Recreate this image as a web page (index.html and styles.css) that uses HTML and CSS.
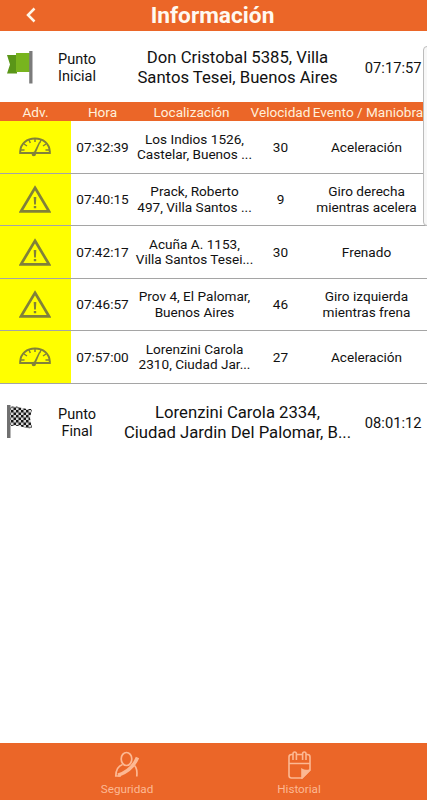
FILE: index.html
```html
<!DOCTYPE html>
<html lang="es">
<head>
<meta charset="utf-8">
<title>Información</title>
<link rel="stylesheet" href="styles.css">
</head>
<body>
<svg class="defs" width="0" height="0">
  <defs>
    <symbol id="gauge" viewBox="0 0 32 20">
      <path d="M1.200 16V14.500C1.600 6.500 8 1.600 16 1.600S30.400 6.500 30.800 14.500V16Z" fill="none" stroke="currentColor" stroke-width="2"/>
      <path d="M2 13h3.500M26.500 13H30M5 7l3 2M27 7l-3 2M10 3l1.300 3M22 3l-1.300 3M16 1.500v3.500" stroke="currentColor" stroke-width="1.500"/>
      <path d="M20 5l1.300.5L16.300 17h-2.300z" fill="currentColor"/>
      <circle cx="14.800" cy="17" r="2.200" fill="currentColor"/>
    </symbol>
    <symbol id="warn" viewBox="0 0 32 28">
      <path d="M16 2.800L30 26.300H2Z" fill="none" stroke="currentColor" stroke-width="2.700"/>
      <path d="M14.700 12h2.600l-.4 7.500h-1.800zM14.800 21h2.400v2.200h-2.400z" fill="currentColor"/>
    </symbol>
    <pattern id="checks" width="5" height="5" patternUnits="userSpaceOnUse">
      <path d="M0 0h5v5H0z" fill="#d4d4d4"/>
      <path d="M0 0h2.500v2.500H0zM2.500 2.500H5V5H2.500z" fill="#171717"/>
    </pattern>
  </defs>
</svg>
<div class="app">
  <header class="bar">
    <svg class="back" width="12" height="16" viewBox="0 0 12 16"><path d="M9.500 1.500L3 8l6.500 6.500" fill="none" stroke="#fff6e8" stroke-width="2.500"/></svg>
    <h1>Información</h1>
  </header>
  <main>
    <section class="point start">
      <svg class="flag" width="28" height="34" viewBox="0 0 28 34"><path d="M1 5h10v18.500H1l3-9z" fill="#5a9618"/><path d="M10 3h14v19H10z" fill="#78b41e"/><path d="M23.200 1h3.300v32.500h-3.300z" fill="#7b7b7b"/></svg>
      <div class="label">Punto<br>Inicial</div>
      <div class="address">Don Cristobal 5385, Villa<br>Santos Tesei, Buenos Aires</div>
      <time>07:17:57</time>
    </section>
    <section class="events">
      <div class="row head"><span>Adv.</span><span>Hora</span><span class="loc">Localización</span><span>Velocidad</span><span class="event">Evento / Maniobra</span></div>
      <div class="row"><span class="adv"><svg class="gauge"><use href="#gauge"/></svg></span><span class="hour">07:32:39</span><span>Los Indios 1526,<br>Castelar, Buenos ...</span><span>30</span><span>Aceleración</span></div>
      <div class="row"><span class="adv"><svg class="warn"><use href="#warn"/></svg></span><span class="hour">07:40:15</span><span>Prack, Roberto<br>497, Villa Santos ...</span><span>9</span><span>Giro derecha<br>mientras acelera</span></div>
      <div class="row"><span class="adv"><svg class="warn"><use href="#warn"/></svg></span><span class="hour">07:42:17</span><span>Acuña A. 1153,<br>Villa Santos Tesei...</span><span>30</span><span>Frenado</span></div>
      <div class="row"><span class="adv"><svg class="warn"><use href="#warn"/></svg></span><span class="hour">07:46:57</span><span>Prov 4, El Palomar,<br>Buenos Aires</span><span>46</span><span>Giro izquierda<br>mientras frena</span></div>
      <div class="row"><span class="adv"><svg class="gauge"><use href="#gauge"/></svg></span><span class="hour">07:57:00</span><span>Lorenzini Carola<br>2310, Ciudad Jar...</span><span>27</span><span>Aceleración</span></div>
    </section>
    <section class="point end">
      <svg class="flag" width="28" height="34" viewBox="0 0 28 34"><path d="M1 0h3.500v33H1z" fill="#707070"/><path d="M4.500 2c5-1 8 0 11.500 1s6 1 10 1l-2 9 2 10c-5 .5-8-.5-11-1.500s-6-1-10.500-.5z" fill="url(#checks)"/></svg>
      <div class="label">Punto<br>Final</div>
      <div class="address">Lorenzini Carola 2334,<br>Ciudad Jardin Del Palomar, B...</div>
      <time>08:01:12</time>
    </section>
  </main>
  <nav class="tabs">
    <a class="tab">
      <svg width="26" height="28" viewBox="0 0 26 28" fill="none" stroke="currentColor"><ellipse cx="12.500" cy="8" rx="5.300" ry="6.500" stroke-width="1.700"/><path d="M8.500 13.500C4 15 2 18 1.800 25h5" stroke-width="1.700"/><path d="M23.500 6.500C20 15 14 21 4 24.300" stroke-width="3.600"/><path d="M20.500 14.500c2.500 2.500 2.800 6 2.300 11" stroke-width="1.700"/></svg>
      <span>Seguridad</span>
    </a>
    <a class="tab">
      <svg width="26" height="28" viewBox="0 0 26 28" fill="none" stroke="currentColor" stroke-width="1.600"><path d="M7 3.500H5.500Q3 3.500 3 6v18.500Q3 27 5.500 27H16l8-8V6q0-2.500-2.500-2.500H20M10.500 3.500h6M3 12.500h21"/><path d="M7 9V3q0-2 1.700-2t1.700 2v6M16.600 9V3q0-2 1.700-2T20 3v6"/><path d="M16 27v-8.500q3 2 8 .5z" fill="currentColor"/></svg>
      <span>Historial</span>
    </a>
  </nav>
  <div class="edge-panel"></div>
</div>
</body>
</html>
```
FILE: styles.css
```css
* { box-sizing: border-box; }
body { margin: 0; background: #fff; color: #111; font-family: Roboto, "Liberation Sans", sans-serif; }
.defs { position: absolute; }
.app { position: relative; display: flex; flex-direction: column; width: 427px; height: 800px; overflow: hidden; }
.bar { display: grid; grid-template-columns: 26px 1fr 28px; align-items: center; height: 31px; background: #eb6628; color: #fff9f0; flex: none; }
.back { margin: -2px 0 0 25px; }
h1 { margin: 0; text-align: center; font-size: 22.7px; line-height: 31px; font-weight: 700; }
main { flex: 1; }
.point { display: grid; grid-template-columns: 43px 68px 253px 1fr; align-items: center; text-align: center; white-space: nowrap; }
.start { height: 71px; padding-top: 2px; }
.end { height: 79px; }
.flag { margin: -2px 0 0 6.5px; }
.label { font-size: 14.5px; line-height: 17px; }
.address { font-size: 16.7px; line-height: 20px; }
.start .flag, .end .flag { margin-left: 6px; }
.start .flag { margin-top: -1px; }
.start .address { padding-top: 1px; }
.point time { font-size: 14.7px; padding-right: 5.5px; justify-self: end; }
.row { display: grid; grid-template-columns: 71px 63px 121px 51px 121px; align-items: center; height: 52.5px; border-bottom: 1px solid #a5a5a5; text-align: center; font-size: 13.6px; line-height: 15.5px; white-space: nowrap; }
.row > span { justify-self: center; padding-top: 1px; }
.row .adv { display: flex; align-items: center; justify-content: center; align-self: stretch; justify-self: stretch; padding: 0 2px 0 0; background: #ff0; color: #81813a; }
.head { height: 19px; background: #eb6628; border: 0; color: #fff0dc; font-size: 13.6px; }
.row.head > span { padding-top: 2px; }
.head .loc { padding-right: 6px; }
.head .event { padding-left: 3px; }
.gauge { width: 32px; height: 20px; }
.warn { width: 32px; height: 28px; }
.tabs { display: flex; justify-content: center; height: 57px; padding-right: 1px; background: #eb6628; color: #fcb893; flex: none; }
.tab { display: flex; flex-direction: column; align-items: center; width: 172px; padding-top: 8px; font-size: 11.7px; line-height: 14px; }
.tab span { margin-top: 3px; }
.edge-panel { position: absolute; left: 423px; top: 46px; width: 10px; height: 180px; border: 1px solid #bcbcbc; border-radius: 4px; background: #f7f7f7; }
```
